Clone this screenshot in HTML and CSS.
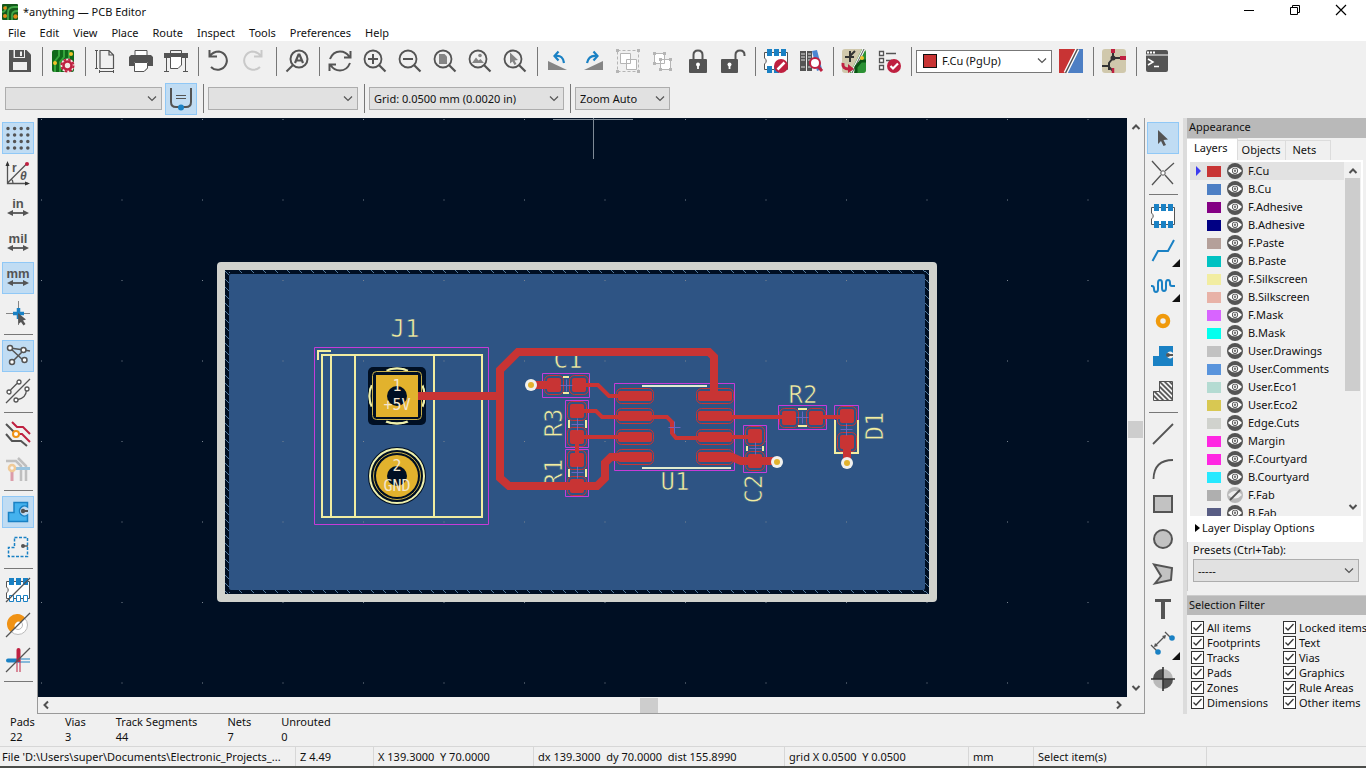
FILE: index.html
```html
<!DOCTYPE html>
<html lang="en">
<head>
<meta charset="utf-8">
<title>*anything — PCB Editor</title>
<link rel="stylesheet" href="styles.css">
</head>
<body>
<svg class="defs" aria-hidden="true">
  <symbol id="eye" viewBox="0 0 16 16"><circle cx="8" cy="8" r="8" fill="#545454"/><path d="M1 8Q8 0 15 8Q8 15 1 8Z" fill="#fff"/><circle cx="8" cy="7.800" r="3.100" fill="#545454"/><circle cx="8" cy="7.800" r="2.200" fill="#fff"/><circle cx="8" cy="7.800" r="1.200" fill="#777"/></symbol>
  <symbol id="eye-off" viewBox="0 0 16 16"><circle cx="8" cy="8" r="8" fill="#b9b9b9"/><path d="M1 8Q8 0 15 8Q8 15 1 8Z" fill="#eee"/><path d="M3 13L13 3" stroke="#545454" stroke-width="1.800"/></symbol>
  <symbol id="lens" viewBox="0 0 24 24"><circle cx="10" cy="10" r="8.500" fill="none" stroke="#545454" stroke-width="1.800"/><path d="M16 16L22.500 22.500" stroke="#545454" stroke-width="2.200"/></symbol>
</svg>

<header class="titlebar">
  <svg class="app-icon" viewBox="0 0 16 16"><rect width="16" height="16" rx="1" fill="#14591b"/><path d="M6 16V9Q6 3 12 3H16M10 16V11Q10 7 16 7M0 8Q4 8 4 2" fill="none" stroke="#42a647" stroke-width="1.800"/><circle cx="3" cy="4" r="1.800" fill="#e18a19"/><circle cx="3" cy="12" r="2" fill="#e18a19"/><circle cx="13.500" cy="12.500" r="2.200" fill="#e18a19"/></svg>
  <h1>*anything — PCB Editor</h1>
  <div class="window-buttons">
    <button aria-label="Minimize"><svg viewBox="0 0 12 12"><path d="M1 6.500H11" stroke="#000"/></svg></button>
    <button aria-label="Restore"><svg viewBox="0 0 12 12"><path d="M1.500 3.500H8.500V10.500H1.500ZM3.500 3.500V1.500H10.500V8.500H8.500" fill="none" stroke="#000"/></svg></button>
    <button aria-label="Close"><svg viewBox="0 0 12 12"><path d="M1 1L11 11M11 1L1 11" stroke="#000" stroke-width="1.200"/></svg></button>
  </div>
</header>

<nav class="menubar">
  <button>File</button><button>Edit</button><button>View</button><button>Place</button><button>Route</button><button>Inspect</button><button>Tools</button><button>Preferences</button><button>Help</button>
</nav>

<div class="toolbar toolbar-main">
  <button class="tool" aria-label="Save"><svg viewBox="0 0 24 24"><path d="M1 1H18.500L23 5.500V23H1Z" fill="#545454"/><path d="M5.500 1H17V9H5.500Z" fill="#f0f0f0"/><path d="M7 1H16V8H7Z" fill="#545454"/><path d="M12 2.500H14V7H12Z" fill="#f0f0f0"/><path d="M5 13H19V21H5Z" fill="#f0f0f0"/></svg></button>
  <span class="sep"></span>
  <button class="tool" aria-label="Board setup"><svg viewBox="0 0 24 24"><rect x="1" y="1" width="22" height="22" rx="2" fill="#10691a"/><path d="M8 1V7L4 12V23M13 1V8L9 13V23M18 1V10" fill="none" stroke="#34a43b" stroke-width="2"/><circle cx="4" cy="14" r="2" fill="#f0c22b"/><circle cx="20" cy="5" r="2" fill="#f0c22b"/><circle cx="16.500" cy="16.500" r="7" fill="#f2e9e4"/><circle cx="16.500" cy="16.500" r="4" fill="none" stroke="#bf2040" stroke-width="2.600"/><circle cx="16.500" cy="16.500" r="6" fill="none" stroke="#bf2040" stroke-width="2" stroke-dasharray="2.700 2"/></svg></button>
  <span class="sep"></span>
  <button class="tool" aria-label="Page settings"><svg viewBox="0 0 24 24" fill="none" stroke="#545454"><path d="M6 1.500H15L19.500 6V19.500H6ZM15 1.500V6H19.500" stroke-width="1.200"/><path d="M2.500 1V20M1 1.500H4M1 19.500H4M5 22.500H20M5.500 21V24M19.500 21V24"/></svg></button>
  <button class="tool" aria-label="Print"><svg viewBox="0 0 24 24"><path d="M6 6V1.500H18V6M6 17V22.500H15L18 19.500V17" fill="#fff" stroke="#545454"/><path d="M2 6H22L24 8V17H19V13H5V17H0V8Z" fill="#545454"/><path d="M5.500 13.500H18.500V19L15 22.500H5.500Z" fill="#fff" stroke="#545454"/></svg></button>
  <button class="tool" aria-label="Plot"><svg viewBox="0 0 24 24" fill="none" stroke="#545454"><path d="M6.500 4V1.500H17.500V4M2.500 8V22.500M21.500 8V22.500M0 22.500H5M19 22.500H24"/><path d="M0 4H24V9H0Z" fill="#545454" stroke="none"/><path d="M6.500 7.500H17.500V16L14 19.500H6.500Z" fill="#fff"/></svg></button>
  <span class="sep"></span>
  <button class="tool" aria-label="Undo"><svg viewBox="0 0 24 24" fill="none" stroke="#545454" stroke-width="2"><path d="M2.500 1V7.500H10M2.500 7.500Q6 2.500 12 2.500A9.200 9.200 0 1 1 4 18"/></svg></button>
  <button class="tool" aria-label="Redo" disabled><svg viewBox="0 0 24 24" fill="none" stroke="#c9c9c9" stroke-width="2"><path d="M19.500 1V7.500H12M19.500 7.500Q16 2.500 10 2.500A9.200 9.200 0 1 0 18 18"/></svg></button>
  <span class="sep"></span>
  <button class="tool" aria-label="Find"><svg viewBox="0 0 24 24" fill="none" stroke="#545454" stroke-width="2"><circle cx="14" cy="10" r="8.500"/><path d="M8 16L1.500 22.500"/><path d="M10 14L13.500 5.500H14.500L18 14M11.500 11.500H16.500" stroke-width="2.200"/></svg></button>
  <span class="sep"></span>
  <button class="tool" aria-label="Refresh"><svg viewBox="0 0 24 24" fill="none" stroke="#545454" stroke-width="2"><path d="M2 10Q5 2.500 12 2.500Q18 2.500 21.500 8M22.500 2V8.500H16M22 14Q19 21.500 12 21.500Q6 21.500 2.500 16M1.500 22V15.500H8"/></svg></button>
  <button class="tool" aria-label="Zoom in"><svg viewBox="0 0 24 24"><use href="#lens"/><path d="M5 10H15M10 5V15" stroke="#545454" stroke-width="2"/></svg></button>
  <button class="tool" aria-label="Zoom out"><svg viewBox="0 0 24 24"><use href="#lens"/><path d="M5 10H15" stroke="#545454" stroke-width="2"/></svg></button>
  <button class="tool" aria-label="Zoom to page"><svg viewBox="0 0 24 24"><use href="#lens"/><path d="M6 5H11.500L14 7.500V15H6Z" fill="#858585"/></svg></button>
  <button class="tool" aria-label="Zoom to objects"><svg viewBox="0 0 24 24"><use href="#lens"/><path d="M4 14L8 8.500L10.500 11.500L12.500 10L16 14Z" fill="#858585"/><circle cx="12" cy="6.500" r="1.800" fill="#858585"/></svg></button>
  <button class="tool" aria-label="Zoom to selection"><svg viewBox="0 0 24 24"><use href="#lens"/><path d="M7 3.500L15 11L11.500 11.500L13.500 15L11.500 16L9.500 12.500L7 14.500Z" fill="#858585"/></svg></button>
  <span class="sep"></span>
  <button class="tool" aria-label="Rotate left"><svg viewBox="0 0 24 24"><path d="M2 12L21 21H2Z" fill="#858585"/><path d="M10 7Q17 6 18 14" fill="none" stroke="#1a81c4" stroke-width="2.200"/><path d="M12.500 2.500L8.500 7L12.500 11.500" fill="none" stroke="#1a81c4" stroke-width="2.200"/></svg></button>
  <button class="tool" aria-label="Rotate right"><svg viewBox="0 0 24 24"><path d="M22 12L3 21H22Z" fill="#858585"/><path d="M15 7Q8 6 6 14" fill="none" stroke="#1a81c4" stroke-width="2.200"/><path d="M12.500 2.500L16.500 7L12.500 11.500" fill="none" stroke="#1a81c4" stroke-width="2.200"/></svg></button>
  <button class="tool" aria-label="Group" disabled><svg viewBox="0 0 24 24" stroke="#b5b5b5"><path d="M1.500 1.500H22.500V22.500H1.500Z" fill="none" stroke-dasharray="3 2"/><path d="M4.500 4.500H14.500V14.500H4.500ZM10.500 10.500H20.500V20.500H10.500Z" fill="#fff"/><path d="M0 1.500H3M21 1.500H24M0 22.500H3M21 22.500H24" stroke-width="3"/></svg></button>
  <button class="tool" aria-label="Ungroup" disabled><svg viewBox="0 0 24 24" stroke="#b5b5b5"><path d="M3.500 4.500H13.500V14.500H3.500ZM9.500 10.500H19.500V20.500H9.500Z" fill="#fff"/><path d="M2 4.500H5M12 4.500H15M2 14.500H5M8 10.500H11M18 10.500H21M8 20.500H11M18 20.500H21" stroke-width="3"/></svg></button>
  <button class="tool" aria-label="Lock"><svg viewBox="0 0 24 24"><path d="M7.500 11V6Q7.500 1.500 12 1.500T16.500 6V11" fill="none" stroke="#545454" stroke-width="2"/><rect x="3" y="10" width="18" height="14" rx="1" fill="#545454"/><path d="M12 14V20" stroke="#fff" stroke-width="1.800"/><circle cx="12" cy="15.500" r="2" fill="#fff"/></svg></button>
  <button class="tool" aria-label="Unlock"><svg viewBox="0 0 24 24"><path d="M14.500 11V6Q14.500 1.500 19 1.500T23.500 6V7" fill="none" stroke="#545454" stroke-width="2"/><rect x="0" y="10" width="17" height="14" rx="1" fill="#545454"/><path d="M8.500 14V20" stroke="#fff" stroke-width="1.800"/><circle cx="8.500" cy="15.500" r="2" fill="#fff"/></svg></button>
  <span class="sep"></span>
  <button class="tool" aria-label="Footprint editor"><svg viewBox="0 0 24 24"><path d="M.5 3.500H23.500V20.500H.5V15Q4 12 .5 9Z" fill="#fff" stroke="#545454"/><path d="M3 0H8V7H3ZM10 0H15V7H10ZM17 0H22V7H17ZM3 17H8V24H3ZM10 17H15V24H10Z" fill="#1a81c4"/><circle cx="17" cy="17" r="7" fill="#bf2040"/><path d="M13.500 20.500L20.500 13.500" stroke="#fff" stroke-width="2.500"/></svg></button>
  <button class="tool" aria-label="Footprint browser"><svg viewBox="0 0 24 24"><path d="M1 2H7V22H1ZM8 2H13V22H8Z" fill="#545454"/><path d="M2 5H6M9 5H12M2 8H6M9 8H12M2 11H6M9 11H12M2 18H6M9 18H12" stroke="#ddd"/><path d="M13 2L18 1L23 20L18 22Z" fill="#4b86d2"/><circle cx="16" cy="14" r="5" fill="#fff" stroke="#bf2040" stroke-width="2"/><path d="M19.500 18L23 22" stroke="#bf2040" stroke-width="3"/></svg></button>
  <span class="sep"></span>
  <button class="tool" aria-label="Update board from schematic"><svg viewBox="0 0 24 24"><rect width="24" height="24" rx="3" fill="#d0c8ac"/><path d="M24 4V21Q24 24 21 24H8L20 0Q24 0 24 4Z" fill="#2b9134"/><path d="M10 24L22 0" stroke="#fff" stroke-width="3"/><path d="M10 24L22 0" stroke="#545454"/><path d="M3 8H12M8 2V13M13 2L8 7" stroke="#333" stroke-width="2"/><path d="M14 24V18L19 12H24" fill="none" stroke="#0b5415" stroke-width="3"/><circle cx="20" cy="9" r="2" fill="#f0c22b"/><path d="M1 14Q0 20 7 20" fill="none" stroke="#bf2040" stroke-width="3"/><path d="M6 15L12 20L6 24Z" fill="#bf2040"/></svg></button>
  <button class="tool" aria-label="Design rules check"><svg viewBox="0 0 24 24"><path d="M2.500 2.500H6.500V6.500H2.500ZM2.500 9.500H6.500V13.500H2.500ZM2.500 16.500H6.500V20.500H2.500Z" fill="#fff" stroke="#545454" stroke-width="1.300"/><path d="M9 4.500H19M9 11.500H15" stroke="#545454" stroke-width="1.500"/><circle cx="17" cy="17" r="7" fill="#bf2040"/><path d="M13.500 17L16 19.500L21 14.500" fill="none" stroke="#fff" stroke-width="2.200"/></svg></button>
  <span class="sep"></span>
  <div class="layer-picker"><span class="layer-picker-swatch"></span><select class="select select-layer" aria-label="Active layer"><option>F.Cu (PgUp)</option></select></div>
  <button class="tool" aria-label="Layer pair"><svg viewBox="0 0 24 24"><rect width="24" height="24" fill="#4d7fc4"/><path d="M0 0H18L6 24H0Z" fill="#c83434"/><path d="M6.500 24L18.500 0" stroke="#fff" stroke-width="4"/><path d="M6.500 24L18.500 0" stroke="#545454" stroke-width="1.500"/></svg></button>
  <span class="sep"></span>
  <button class="tool" aria-label="Schematic editor"><svg viewBox="0 0 24 24"><rect width="24" height="24" rx="3" fill="#d0c8ac"/><path d="M11 1V9L7 14V21M11 9H18M0 17H7M7 18L11 22" fill="none" stroke="#333" stroke-width="2"/><circle cx="11" cy="9" r="2.500" fill="#333"/><path d="M11 0V4M18 9H24" stroke="#bf2040" stroke-width="4"/><path d="M11 19V24" stroke="#bf2040" stroke-width="2.500"/></svg></button>
  <span class="sep"></span>
  <button class="tool" aria-label="Scripting console"><svg viewBox="0 0 24 24"><rect x="1" y="1" width="22" height="22" rx="2" fill="#545454"/><path d="M1 6H23" stroke="#fff"/><path d="M2 3.500H4M5 3.500H7M8 3.500H10" stroke="#fff" stroke-width="2"/><path d="M3 10L8 13L3 16M9 17.500H14" fill="none" stroke="#fff" stroke-width="1.500"/></svg></button>
</div>

<div class="toolbar toolbar-options">
  <select class="select select-track" aria-label="Track width" disabled></select>
  <button class="tool active" aria-label="Auto track width"><svg viewBox="0 0 24 24" fill="none" stroke="#545454" stroke-width="2"><path d="M2 1V15Q2 20 7 20H17Q22 20 22 15V1"/><path d="M7 8.500H17M7 11.500H17" stroke-width="1.200"/><circle cx="12" cy="20.500" r="3" fill="#1a81c4" stroke="none"/></svg></button>
  <span class="sep"></span>
  <select class="select select-via" aria-label="Via size" disabled></select>
  <span class="sep"></span>
  <select class="select select-grid" aria-label="Grid"><option>Grid: 0.0500 mm (0.0020 in)</option></select>
  <span class="sep"></span>
  <select class="select select-zoom" aria-label="Zoom"><option>Zoom Auto</option></select>
</div>

<main class="workspace">
  <div class="sidebar sidebar-left">
    <button class="tool active" aria-label="Show grid"><svg viewBox="0 0 24 24"><path d="M2 2.500H24M2 9H24M2 15.500H24M2 22H24" stroke="#545454" stroke-width="3.500" stroke-linecap="round" stroke-dasharray="0 6.600"/></svg></button>
    <button class="tool" aria-label="Polar coordinates"><svg viewBox="0 0 24 24"><path d="M1.500 2V22.500H22M1.500 22L21 2.500M7 22Q7 19 5 18" fill="none" stroke="#545454" stroke-width="1.300"/><path d="M1.500 0L3.500 5H-.5ZM24 22.500L19 20.500V24.500Z" fill="#333"/><circle cx="21" cy="3" r="2" fill="#bf2040"/><text x="6" y="11" class="glyph">r</text><text x="14" y="19" class="glyph glyph-theta">θ</text></svg></button>
    <button class="tool" aria-label="Inches"><svg viewBox="0 0 24 24"><text x="12" y="12" class="unit">in</text><path d="M4 17H20" stroke="#545454" stroke-width="1.800"/><path d="M1 17L7 14V20ZM23 17L17 14V20Z" fill="#545454"/></svg></button>
    <button class="tool" aria-label="Mils"><svg viewBox="0 0 24 24"><text x="12" y="12" class="unit">mil</text><path d="M4 17H20" stroke="#545454" stroke-width="1.800"/><path d="M1 17L7 14V20ZM23 17L17 14V20Z" fill="#545454"/></svg></button>
    <button class="tool active" aria-label="Millimeters"><svg viewBox="0 0 24 24"><text x="12" y="12" class="unit">mm</text><path d="M4 17H20" stroke="#545454" stroke-width="1.800"/><path d="M1 17L7 14V20ZM23 17L17 14V20Z" fill="#545454"/></svg></button>
    <button class="tool" aria-label="Full-window crosshair"><svg viewBox="0 0 24 24"><path d="M0 12.500H24M12.500 0V24" stroke="#858585"/><path d="M7 12.500H18M12.500 7V18" stroke="#1a81c4" stroke-width="3.500"/><path d="M12 12L20 18.500L17 19.500L19.500 23L17.500 24.500L15 21L12.500 23Z" fill="#545454"/></svg></button>
    <span class="sep"></span>
    <button class="tool active" aria-label="Show ratsnest"><svg viewBox="0 0 24 24" fill="#fff" stroke="#545454" stroke-width="1.500"><path d="M4 4L18 6L24 7M4 4L18 17M18 6L6 18"/><circle cx="4" cy="4" r="2.500"/><circle cx="17.500" cy="6" r="2.500"/><circle cx="18.500" cy="16" r="2.500"/><circle cx="6" cy="18" r="2.500"/></svg></button>
    <button class="tool" aria-label="Curved ratsnest"><svg viewBox="0 0 24 24" fill="none" stroke="#545454" stroke-width="1.300"><path d="M0 24L24 0M4.500 11L11 4.500M20.500 11Q20 19 12 20.500"/><g fill="#fff"><circle cx="3" cy="13" r="2"/><circle cx="13" cy="3" r="2"/><circle cx="21" cy="10" r="2"/><circle cx="10" cy="21" r="2"/></g></svg></button>
    <span class="sep"></span>
    <button class="tool" aria-label="High contrast display"><svg viewBox="0 0 24 24" fill="none" stroke-width="2"><path d="M6 0L11 5H17L24 12M10 12H16L24 20" stroke="#bf2040"/><path d="M0 2L10 12M0 12L6 19H15L21 24" stroke="#545454"/><circle cx="10" cy="12" r="3" fill="#fff" stroke="#f09214"/></svg></button>
    <button class="tool faded" aria-label="Net highlight"><svg viewBox="0 0 24 24" fill="none" stroke-width="2.500"><path d="M0 4H10L15 9V24M12 1L20 9V24" stroke="#777"/><path d="M6 12V24" stroke="#bf2040" stroke-width="3"/><path d="M6 11.500H24" stroke="#1a81c4" stroke-width="3"/><circle cx="6" cy="11" r="3" fill="#fff" stroke="#f09214"/></svg></button>
    <span class="sep"></span>
    <button class="tool active" aria-label="Show filled zones"><svg viewBox="0 0 24 24"><path d="M8 2.500H21.500V7A5 5 0 1 0 21.500 15V21.500H2.500V12.500H8Z" fill="#44b2ee" stroke="#1a81c4" stroke-width="1.500"/><path d="M17 11H22" stroke="#545454" stroke-width="2"/><circle cx="17" cy="11" r="2.200" fill="#545454"/></svg></button>
    <button class="tool" aria-label="Show zone outlines"><svg viewBox="0 0 24 24"><path d="M8.500 2.500H21.500V21.500H2.500V12.500H8.500Z" fill="none" stroke="#1a81c4" stroke-width="1.500" stroke-dasharray="3 1.500"/><path d="M17 11H22" stroke="#545454" stroke-width="1.500"/><circle cx="17" cy="11" r="2" fill="#545454"/></svg></button>
    <span class="sep"></span>
    <button class="tool" aria-label="Sketch pads"><svg viewBox="0 0 24 24"><path d="M.5 3.500H23.500V20.500H.5V15Q4 12 .5 9Z" fill="#fff" stroke="#545454"/><path d="M3 0H8V7H3ZM10 0H15V7H10ZM17 0H22V7H17Z" fill="#1a81c4"/><path d="M3.500 17.500H7.500V23.500H3.500ZM10.500 17.500H14.500V23.500H10.500ZM17.500 17.500H21.500V23.500H17.500Z" fill="#fff" stroke="#1a81c4"/><path d="M0 24L24 0" stroke="#545454" stroke-width="1.300"/></svg></button>
    <button class="tool" aria-label="Sketch vias"><svg viewBox="0 0 24 24"><circle cx="12" cy="12" r="9.500" fill="#fff" stroke="#bbb"/><circle cx="12" cy="12" r="4.500" fill="none" stroke="#bbb"/><path d="M5 19A10 10 0 1 1 19 5L15 9A4.500 4.500 0 0 0 9 15Z" fill="#f09214"/><path d="M0 24L24 0" stroke="#545454" stroke-width="1.300"/></svg></button>
    <button class="tool" aria-label="Sketch tracks"><svg viewBox="0 0 24 24"><path d="M2 12.500H12" stroke="#1a81c4" stroke-width="4" stroke-linecap="round"/><path d="M12 11H24M12 14H24" stroke="#1a81c4"/><path d="M12.500 2V12" stroke="#bf2040" stroke-width="4" stroke-linecap="round"/><path d="M11 12V24M14 12V24" stroke="#bf2040"/><path d="M0 24L24 0" stroke="#545454" stroke-width="1.300"/></svg></button>
    <span class="sep"></span>
  </div>

  <section class="viewport" aria-label="Board">
    <svg class="board" viewBox="38 118 1089 579" preserveAspectRatio="xMidYMid slice">
      <defs>
        <pattern id="grid" x="41" y="119" width="80.500" height="80.500" patternUnits="userSpaceOnUse"><rect width="1" height="1" fill="#7b8490"/></pattern>
        <pattern id="hatch-v" x="225" y="270" width="4" height="8" patternUnits="userSpaceOnUse"><path d="M0 1L4 5" stroke="#557c9f"/></pattern>
        <pattern id="hatch-h" x="225" y="270" width="12" height="4" patternUnits="userSpaceOnUse"><path d="M2 0L5 3" stroke="#557c9f"/></pattern>
        <g id="pad-wide"><rect x="-18.500" y="-7.500" width="37" height="15" rx="5" fill="none" stroke="#c83434"/><rect x="-17" y="-5" width="34" height="10" rx="2" fill="#c83434"/></g>
        <g id="pad-chip"><rect x="-9.500" y="-9.500" width="19" height="19" rx="5" fill="none" stroke="#c83434"/><rect x="-7" y="-7" width="14" height="14" rx="2" fill="#c83434"/></g>
        <g id="via"><circle r="6" fill="#f1f1ee"/><circle r="3" fill="#e2b22d"/></g>
        <path id="origin" d="M-5.500 .5H6.500M.5-5.500V6.500" stroke="#7a6ad0" opacity="0.800"/>
      </defs>
      <rect x="38" y="118" width="1089" height="579" fill="#000f23"/>
      <rect x="221" y="266" width="712" height="332" fill="#000f23" stroke="#d0d2cd" stroke-width="8" stroke-linejoin="round"/>
      <path d="M225 270H229V594H225ZM925 270H929V594H925Z" fill="url(#hatch-v)"/>
      <path d="M229 270H925V274H229ZM229 590H925V594H229Z" fill="url(#hatch-h)"/>
      <rect x="229" y="274" width="696" height="316" rx="2" fill="#2e5484"/>
      <rect x="38" y="118" width="1089" height="579" fill="url(#grid)"/>
      <path d="M553 119.500H633M593.500 118V159" stroke="#7e8a96"/>

      <g class="designator">
        <text x="405" y="337">J1</text>
        <text x="568" y="368">C1</text>
        <text x="675" y="490">U1</text>
        <text x="803" y="403">R2</text>
        <text transform="translate(562 423) rotate(-90)">R3</text>
        <text transform="translate(562 473) rotate(-90)">R1</text>
        <text transform="translate(762 489) rotate(-90)">C2</text>
        <text transform="translate(883 426) rotate(-90)">D1</text>
      </g>

      <g fill="none" stroke="#f2eda1" stroke-width="2">
        <path d="M322 355H482V517H322ZM331 355V517M355 355V517M434 355V517M318 360V351H331"/>
        <path d="M642 386H707M642 468H731" stroke="#e0ecd0"/>
        <path d="M563 377H569M563 393H569M569 420V428M586 420V428M569 469V477M586 469V477M747 446V451M763 446V451M798 409H807M798 426H807M835 420V453H858V420"/>
      </g>
      <g fill="none" stroke="#c63bd8">
        <path d="M314.500 347.500H488.500V524.500H314.500ZM542.500 373.500H589.500V397.500H542.500ZM565.500 400.500H588.500V447.500H565.500ZM565.500 449.500H588.500V496.500H565.500ZM614.500 383.500H734.500V470.500H614.500ZM743.500 425.500H766.500V472.500H743.500ZM778.500 405.500H826.500V429.500H778.500ZM834.500 420V405.500H858.500V420"/>
      </g>

      <rect x="368" y="367" width="58" height="58" rx="5" fill="#000f23"/>
      <circle cx="397" cy="396" r="27.500" fill="none" stroke="#eef0ac" stroke-width="2"/>
      <rect x="370" y="369" width="53" height="53" rx="5" fill="#000f23"/>
      <circle cx="397" cy="396" r="27.500" fill="none" stroke="#eef0ac" stroke-width="2" stroke-dasharray="22 21.200" stroke-dashoffset="11"/>
      <rect x="372.500" y="371.500" width="49" height="48" rx="4" fill="#000f23" stroke="#c9b14a"/>
      <rect x="376" y="375" width="42" height="42" fill="#e2b22d"/>
      <circle cx="397" cy="396" r="10" fill="#000f23"/>
      <circle cx="397" cy="476" r="28" fill="#000f23" stroke="#000f23" stroke-width="2"/>
      <circle cx="397" cy="476" r="27" fill="none" stroke="#eef0ac" stroke-width="2"/>
      <circle cx="397" cy="476" r="23.500" fill="none" stroke="#c9b14a"/>
      <circle cx="397" cy="476" r="21" fill="#e2b22d"/>
      <circle cx="397" cy="476" r="10" fill="#000f23"/>

      <g fill="none" stroke="#c83434" stroke-linecap="round">
        <path d="M418 396H500" stroke-width="8" stroke-linecap="butt"/>
        <path d="M714 396V357L709 352H518L500 370V478L509 486H597L605 478V463L611 457H620M531 385H552M732 457L741 461H777M847 442V463" stroke-width="8"/>
        <path d="M580 385H598L609 396H620M577 411H596L602 417H620M577 437H620M577 437V460M651 417H667L672 422V433L676 438H698M732 417H785M820 417H842M732 437H755" stroke-width="4"/>
      </g>
      <use href="#pad-wide" x="635" y="396"/><use href="#pad-wide" x="635" y="416"/><use href="#pad-wide" x="635" y="437"/><use href="#pad-wide" x="635" y="457"/>
      <use href="#pad-wide" x="715" y="396"/><use href="#pad-wide" x="715" y="416"/><use href="#pad-wide" x="715" y="437"/><use href="#pad-wide" x="715" y="457"/>
      <use href="#pad-chip" x="554" y="385"/><use href="#pad-chip" x="579" y="385"/>
      <use href="#pad-chip" x="577" y="411"/><use href="#pad-chip" x="577" y="437"/>
      <use href="#pad-chip" x="577" y="460"/><use href="#pad-chip" x="577" y="486"/>
      <use href="#pad-chip" x="755" y="436"/><use href="#pad-chip" x="755" y="461"/>
      <use href="#pad-chip" x="789" y="418"/><use href="#pad-chip" x="816" y="418"/>
      <use href="#pad-chip" x="847" y="416"/><use href="#pad-chip" x="847" y="442"/>
      <use href="#via" x="531" y="385"/><use href="#via" x="777" y="462"/><use href="#via" x="847" y="463"/>
      <use href="#origin" x="566" y="385"/><use href="#origin" x="577" y="424"/><use href="#origin" x="577" y="472"/><use href="#origin" x="674" y="427"/><use href="#origin" x="755" y="448"/><use href="#origin" x="802" y="417"/><use href="#origin" x="846" y="429"/>
      <g class="pad-label"><text x="397" y="391">1</text><text x="397" y="410">+5V</text><text x="397" y="471">2</text><text x="397" y="491">GND</text></g>
    </svg>
    <div class="scroll scroll-v"><svg class="arrow" viewBox="0 0 10 10"><path d="M1.500 7L5 3.500L8.500 7"/></svg><span class="thumb"></span><svg class="arrow" viewBox="0 0 10 10"><path d="M1.500 3L5 6.500L8.500 3"/></svg></div>
    <div class="scroll scroll-h"><svg class="arrow" viewBox="0 0 10 10"><path d="M7 1.500L3.500 5L7 8.500"/></svg><span class="thumb"></span><svg class="arrow" viewBox="0 0 10 10"><path d="M3 1.500L6.500 5L3 8.500"/></svg></div>
  </section>

  <div class="sidebar sidebar-right">
    <button class="tool active" aria-label="Select"><svg viewBox="0 0 24 24"><path d="M7 4L17 13.500L12.500 14L15 19L12.500 20L10 15L7 18Z" fill="#545454"/></svg></button>
    <button class="tool" aria-label="Local ratsnest"><svg viewBox="0 0 24 24" fill="none" stroke="#545454"><path d="M1 0L10 10M23 2L14 10M1 24L10 14M22 23L14 14" stroke-width="1.300"/><circle cx="12" cy="12" r="2.200" fill="#fff"/></svg></button>
    <span class="sep"></span>
    <button class="tool" aria-label="Add footprint"><svg viewBox="0 0 24 24"><path d="M.5 3.500H23.500V20.500H.5V15Q4 12 .5 9Z" fill="#fff" stroke="#545454"/><path d="M3 0H8V7H3ZM10 0H15V7H10ZM17 0H22V7H17ZM3 17H8V24H3ZM10 17H15V24H10ZM17 17H22V24H17Z" fill="#1a81c4"/></svg></button>
    <button class="tool more" aria-label="Route tracks"><svg viewBox="0 0 24 24"><path d="M1.500 22L7 12H17L23 1" fill="none" stroke="#1a81c4" stroke-width="2"/></svg></button>
    <button class="tool more" aria-label="Tune length"><svg viewBox="0 0 24 24"><path d="M0 12H1Q3 12 3 15T5 18T7 15V9Q7 6 9 6T11 9V14Q11 17 13 17T15 14V9Q15 6 17 6T19 9V10Q19 12 21 12H24" fill="none" stroke="#1a81c4" stroke-width="2"/></svg></button>
    <button class="tool" aria-label="Add via"><svg viewBox="0 0 24 24"><circle cx="12" cy="12" r="5" fill="none" stroke="#f09a0c" stroke-width="4.500"/></svg></button>
    <button class="tool" aria-label="Add filled zone"><svg viewBox="0 0 24 24"><path d="M8 2H22V9A3.500 3.500 0 1 0 22 13V22H2V12H8Z" fill="#1a81c4"/><path d="M17 11H22" stroke="#545454" stroke-width="2"/><circle cx="17" cy="11" r="2" fill="#545454"/></svg></button>
    <button class="tool" aria-label="Add rule area"><svg viewBox="0 0 24 24"><clipPath id="rule-area"><path d="M8 2H22V22H2V12H8Z"/></clipPath><g clip-path="url(#rule-area)" stroke="#545454" stroke-width="1.600"><path d="M-4 10L12 26M-4 5L18 27M0 4L22 26M2 1L24 23M4-2L26 20M7-4L27 16M11-5L28 12M16-5L28 7"/></g><path d="M8.500 2.500H21.500V21.500H2.500V12.500H8.500Z" fill="none" stroke="#545454"/></svg></button>
    <span class="sep"></span>
    <button class="tool" aria-label="Draw line"><svg viewBox="0 0 24 24"><path d="M2 22L22 2" stroke="#545454" stroke-width="1.800"/></svg></button>
    <button class="tool" aria-label="Draw arc"><svg viewBox="0 0 24 24"><path d="M2.500 22Q3 3 22 3" fill="none" stroke="#545454" stroke-width="1.800"/></svg></button>
    <button class="tool" aria-label="Draw rectangle"><svg viewBox="0 0 24 24"><rect x="3" y="4" width="18" height="16" fill="#c2c2c2" stroke="#545454" stroke-width="2"/></svg></button>
    <button class="tool" aria-label="Draw circle"><svg viewBox="0 0 24 24"><circle cx="12" cy="12" r="9" fill="#c2c2c2" stroke="#545454" stroke-width="2"/></svg></button>
    <button class="tool" aria-label="Draw polygon"><svg viewBox="0 0 24 24"><path d="M3 2.500L21 6L20 18L4 21.500L10 14Z" fill="#c2c2c2" stroke="#545454" stroke-width="2"/></svg></button>
    <button class="tool" aria-label="Add text"><svg viewBox="0 0 24 24"><path d="M4 2H20V5H14V22H10V5H4Z" fill="#545454"/></svg></button>
    <button class="tool more" aria-label="Add dimension"><svg viewBox="0 0 24 24"><path d="M4 14L14 4M0 13L6 19M14 0L20 6" stroke="#545454" stroke-width="1.300"/><path d="M3 15L4 11L7 14ZM15 3L11 4L14 7Z" fill="#545454"/><circle cx="21" cy="6" r="2.800" fill="#1a81c4"/><circle cx="7" cy="20" r="2.800" fill="#1a81c4"/></svg></button>
    <button class="tool" aria-label="Drill origin"><svg viewBox="0 0 24 24"><circle cx="12" cy="12" r="10" fill="#b9b9b9"/><path d="M12 2A10 10 0 0 0 2 12H12ZM12 22A10 10 0 0 0 22 12H12Z" fill="#545454"/><path d="M0 12H24M12 0V24" stroke="#333" stroke-width="1.600"/></svg></button>
  </div>

  <aside class="panels">
    <h2 class="panel-title">Appearance</h2>
    <div class="tabs" role="tablist">
      <button class="tab selected" role="tab" aria-selected="true">Layers</button><button class="tab" role="tab">Objects</button><button class="tab" role="tab">Nets</button>
    </div>
    <div class="layers-page">
      <div class="layers">
        <ul class="layer-list">
          <li class="layer current"><span class="swatch f-cu"></span><button class="vis" aria-label="Toggle F.Cu"><svg><use href="#eye"/></svg></button>F.Cu</li>
          <li class="layer"><span class="swatch b-cu"></span><button class="vis" aria-label="Toggle B.Cu"><svg><use href="#eye"/></svg></button>B.Cu</li>
          <li class="layer"><span class="swatch f-adhesive"></span><button class="vis" aria-label="Toggle F.Adhesive"><svg><use href="#eye"/></svg></button>F.Adhesive</li>
          <li class="layer"><span class="swatch b-adhesive"></span><button class="vis" aria-label="Toggle B.Adhesive"><svg><use href="#eye"/></svg></button>B.Adhesive</li>
          <li class="layer"><span class="swatch f-paste"></span><button class="vis" aria-label="Toggle F.Paste"><svg><use href="#eye"/></svg></button>F.Paste</li>
          <li class="layer"><span class="swatch b-paste"></span><button class="vis" aria-label="Toggle B.Paste"><svg><use href="#eye"/></svg></button>B.Paste</li>
          <li class="layer"><span class="swatch f-silk"></span><button class="vis" aria-label="Toggle F.Silkscreen"><svg><use href="#eye"/></svg></button>F.Silkscreen</li>
          <li class="layer"><span class="swatch b-silk"></span><button class="vis" aria-label="Toggle B.Silkscreen"><svg><use href="#eye"/></svg></button>B.Silkscreen</li>
          <li class="layer"><span class="swatch f-mask"></span><button class="vis" aria-label="Toggle F.Mask"><svg><use href="#eye"/></svg></button>F.Mask</li>
          <li class="layer"><span class="swatch b-mask"></span><button class="vis" aria-label="Toggle B.Mask"><svg><use href="#eye"/></svg></button>B.Mask</li>
          <li class="layer"><span class="swatch drawings"></span><button class="vis" aria-label="Toggle User.Drawings"><svg><use href="#eye"/></svg></button>User.Drawings</li>
          <li class="layer"><span class="swatch comments"></span><button class="vis" aria-label="Toggle User.Comments"><svg><use href="#eye"/></svg></button>User.Comments</li>
          <li class="layer"><span class="swatch eco1"></span><button class="vis" aria-label="Toggle User.Eco1"><svg><use href="#eye"/></svg></button>User.Eco1</li>
          <li class="layer"><span class="swatch eco2"></span><button class="vis" aria-label="Toggle User.Eco2"><svg><use href="#eye"/></svg></button>User.Eco2</li>
          <li class="layer"><span class="swatch edge"></span><button class="vis" aria-label="Toggle Edge.Cuts"><svg><use href="#eye"/></svg></button>Edge.Cuts</li>
          <li class="layer"><span class="swatch magenta"></span><button class="vis" aria-label="Toggle Margin"><svg><use href="#eye"/></svg></button>Margin</li>
          <li class="layer"><span class="swatch magenta"></span><button class="vis" aria-label="Toggle F.Courtyard"><svg><use href="#eye"/></svg></button>F.Courtyard</li>
          <li class="layer"><span class="swatch b-court"></span><button class="vis" aria-label="Toggle B.Courtyard"><svg><use href="#eye"/></svg></button>B.Courtyard</li>
          <li class="layer"><span class="swatch f-fab"></span><button class="vis" aria-label="Toggle F.Fab"><svg><use href="#eye-off"/></svg></button>F.Fab</li>
          <li class="layer"><span class="swatch b-fab"></span><button class="vis" aria-label="Toggle B.Fab"><svg><use href="#eye"/></svg></button>B.Fab</li>
        </ul>
        <div class="scroll scroll-list"><svg class="arrow" viewBox="0 0 10 10"><path d="M1.500 7L5 3.500L8.500 7"/></svg><span class="thumb"></span><svg class="arrow" viewBox="0 0 10 10"><path d="M1.500 3L5 6.500L8.500 3"/></svg></div>
      </div>
      <button class="disclosure"><svg viewBox="0 0 5 8"><path d="M0 0L5 4L0 8Z"/></svg>Layer Display Options</button>
    </div>
    <div class="presets">
      <label for="presets">Presets (Ctrl+Tab):</label>
      <select id="presets" class="select"><option>-----</option></select>
    </div>
    <h2 class="panel-title filter-title">Selection Filter</h2>
    <div class="filters">
      <label><input type="checkbox" checked>All items</label><label><input type="checkbox" checked>Locked items</label>
      <label><input type="checkbox" checked>Footprints</label><label><input type="checkbox" checked>Text</label>
      <label><input type="checkbox" checked>Tracks</label><label><input type="checkbox" checked>Vias</label>
      <label><input type="checkbox" checked>Pads</label><label><input type="checkbox" checked>Graphics</label>
      <label><input type="checkbox" checked>Zones</label><label><input type="checkbox" checked>Rule Areas</label>
      <label><input type="checkbox" checked>Dimensions</label><label><input type="checkbox" checked>Other items</label>
    </div>
  </aside>
</main>

<dl class="board-info">
  <div><dt>Pads</dt><dd>22</dd></div>
  <div><dt>Vias</dt><dd>3</dd></div>
  <div><dt>Track Segments</dt><dd>44</dd></div>
  <div><dt>Nets</dt><dd>7</dd></div>
  <div><dt>Unrouted</dt><dd>0</dd></div>
</dl>
<footer class="statusbar">
  <span>File 'D:\Users\super\Documents\Electronic_Projects_...</span>
  <span>Z 4.49</span>
  <span>X 139.3000&nbsp; Y 70.0000</span>
  <span>dx 139.3000&nbsp; dy 70.0000&nbsp; dist 155.8990</span>
  <span>grid X 0.0500&nbsp; Y 0.0500</span>
  <span>mm</span>
  <span>Select item(s)</span>
  <span></span>
</footer>
</body>
</html>
```
FILE: styles.css
```css
* { box-sizing: border-box; }
body {
  margin: 0;
  height: 100vh;
  display: flex;
  flex-direction: column;
  overflow: hidden;
  background: #f0f0f0;
  color: #111;
  font: 11px/16px "Noto Sans", "Open Sans", sans-serif;
}
button, select, input { font: inherit; color: inherit; margin: 0; }
button { border: 0; padding: 0; background: none; }
svg { display: block; }
.defs { position: absolute; width: 0; height: 0; }

.titlebar { display: flex; align-items: center; height: 24px; padding-left: 2px; background: #fff; }
.app-icon { width: 16px; height: 16px; }
.titlebar h1 { margin: 0 0 0 5px; font-size: 11px; font-weight: 400; }
.window-buttons { display: flex; align-self: flex-start; margin-left: auto; padding-right: 2px; }
.window-buttons button { width: 46px; height: 20px; display: grid; place-items: center; }
.window-buttons svg { width: 12px; height: 12px; }

.menubar { display: flex; gap: 14px; height: 17px; padding-left: 8px; background: #fff; }

.toolbar { display: flex; align-items: center; gap: 3px; }
.toolbar-main { height: 40px; padding-left: 4px; }
.toolbar-options { height: 37px; padding: 0 0 2px 5px; }
.toolbar .sep { width: 5px; height: 29px; background: linear-gradient(#777, #777) 3px 0 / 1px 100% no-repeat; }
.tool { position: relative; flex: none; width: 32px; height: 32px; display: grid; place-items: center; }
.tool svg { width: 24px; height: 24px; overflow: visible; }
.tool.active { background: #c0dcf3; border: 1px solid #90c8f6; }
.tool.faded svg { opacity: 0.4; }
.tool.more::after {
  content: "";
  position: absolute;
  right: -1px;
  bottom: 0;
  border-left: 8px solid transparent;
  border-bottom: 8px solid #111;
}
.select {
  appearance: none;
  height: 23px;
  border: 1px solid #adadad;
  border-radius: 0;
  padding: 0 18px 0 4px;
  opacity: 1;
  background: #e1e1e1 url("data:image/svg+xml,%3Csvg xmlns='http://www.w3.org/2000/svg' width='10' height='6'%3E%3Cpath d='M1 .5L5 4.500L9 .5' fill='none' stroke='%23555' stroke-width='1.200'/%3E%3C/svg%3E") right 4px center no-repeat;
}
.select-track { width: 157px; }
.select-via { width: 150px; }
.select-grid { width: 195px; }
.select-zoom { width: 95px; }
.layer-picker { display: grid; align-items: center; width: 136px; }
.layer-picker > * { grid-area: 1 / 1; }
.select-layer { padding-left: 25px; border-color: #777; background-color: #fff; }
.layer-picker-swatch { z-index: 1; width: 14px; height: 14px; margin-left: 7px; border: 1px solid #111; background: #c83434; }

.workspace { flex: 1; min-height: 0; display: flex; }
.sidebar { flex: none; display: flex; flex-direction: column; gap: 3px; padding-top: 4px; }
.sidebar-left { width: 37px; padding-left: 2px; }
.sidebar-right { width: 42px; padding-left: 2px; border-right: 4px solid #dcdcdc; }
.sidebar .sep { width: 29px; height: 5px; margin-left: 2px; background: linear-gradient(#777, #777) center / 100% 1px no-repeat; }
.glyph { font: 700 12px "Liberation Sans", sans-serif; fill: #545454; }
.glyph-theta { font-style: italic; }
.unit { font: 700 13px "Liberation Sans", sans-serif; fill: #545454; text-anchor: middle; }

.viewport {
  flex: 1;
  min-width: 0;
  display: grid;
  grid-template: minmax(0, 1fr) 16px / minmax(0, 1fr) 17px;
  border: 1px solid #999;
  border-width: 0 1px 1px;
  background: #f0f0f0;
}
.board { width: 100%; height: 100%; }
.designator { font: 24px "DejaVu Sans Mono", monospace; fill: #f2eda1; stroke: #2e5484; stroke-width: 0.6px; text-anchor: middle; }
.pad-label { font: 15px "DejaVu Sans Mono", monospace; fill: #f3e6cf; text-anchor: middle; }
.scroll { display: flex; align-items: center; justify-content: space-between; }
.scroll-v, .scroll-list { flex-direction: column; padding: 4px 0; }
.scroll-h { padding: 0 3px; }
.thumb { background: #cdcdcd; }
.scroll-v .thumb { width: 15px; height: 17px; margin-top: 44px; }
.scroll-h .thumb { width: 18px; height: 15px; margin-left: 133px; }
.arrow { flex: none; width: 10px; height: 10px; fill: none; stroke: #505050; stroke-width: 2; }

.panels { flex: none; width: 179px; display: flex; flex-direction: column; }
.panel-title { flex: none; margin: 0; height: 20px; padding: 1px 0 0 2px; background: #b9b9b9; font-size: 11px; font-weight: 400; }
.tabs { flex: none; display: flex; align-items: flex-end; height: 22px; }
.tab { height: 20px; padding: 0 5px 1px 4px; border: 1px solid #dcdcdc; border-width: 1px 1px 0 0; }
.tab.selected { height: 22px; padding: 0 9px 3px 7px; background: #fff; }
.tab:last-child { padding: 0 14px 1px 6px; }
.layers-page { flex: 1; min-height: 0; display: flex; flex-direction: column; margin-right: 3px; padding: 2px 2px 0 3px; background: #fff; }
.layers { flex: 1; min-height: 0; display: flex; background: #f0f0f0; }
.layer-list { flex: 1; overflow: hidden; margin: 0; padding: 0; list-style: none; }
.layer { position: relative; display: flex; align-items: center; height: 18px; padding-left: 17px; }
.layer.current { background: #e2e2e2; }
.layer.current::before { content: ""; position: absolute; left: 6px; border: 5px solid transparent; border-left-color: #3c3cf0; border-right-width: 0; }
.swatch { width: 14px; height: 11px; }
.vis { width: 16px; height: 16px; margin: 0 5px 0 6px; }
.vis svg { width: 16px; height: 16px; }
.scroll-list { width: 17px; }
.scroll-list .thumb { width: 15px; height: 213px; margin: 2px 0 auto; }
.f-cu { background: #c83434; }
.b-cu { background: #4d7fc4; }
.f-adhesive { background: #840084; }
.b-adhesive { background: #000084; }
.f-paste { background: #b4a09a; }
.b-paste { background: #00c2c2; }
.f-silk { background: #f2eda1; }
.b-silk { background: #e8b2a7; }
.f-mask { background: #d864ff; }
.b-mask { background: #02ffee; }
.drawings { background: #c2c2c2; }
.comments { background: #5994dc; }
.eco1 { background: #b4dbd2; }
.eco2 { background: #d8c852; }
.edge { background: #d0d2cd; }
.magenta { background: #ff26e2; }
.b-court { background: #26e9ff; }
.f-fab { background: #afafaf; }
.b-fab { background: #585d84; }
.disclosure { flex: none; display: flex; align-items: center; gap: 2px; height: 26px; padding: 0 0 2px 5px; }
.disclosure svg { width: 5px; height: 8px; }
.presets { flex: none; display: flex; flex-direction: column; gap: 1px; height: 49px; padding: 0 7px 0 5px; border-left: 1px solid #ccc; }
.filter-title { margin-top: 4px; border-top: 1px solid #ccc; }
.filters { flex: none; display: grid; grid-template-columns: 92px 1fr; padding: 5px 0 4px 4px; white-space: nowrap; }
.filters label { display: flex; align-items: center; gap: 3px; height: 15px; }
.filters input {
  appearance: none;
  flex: none;
  width: 13px;
  height: 13px;
  border: 1px solid #333;
  background: #fff url("data:image/svg+xml,%3Csvg xmlns='http://www.w3.org/2000/svg' width='11' height='11'%3E%3Cpath d='M1.500 5.500L4 8L9.500 2' fill='none' stroke='%23333' stroke-width='1.300'/%3E%3C/svg%3E") center no-repeat;
}

.board-info { flex: none; display: flex; gap: 30px; height: 32px; margin: 0; padding: 0 10px; line-height: 15px; }
.board-info dd { margin: 0; }
.statusbar {
  flex: none;
  display: grid;
  grid-template-columns: 296px 78px 160px 251px 184px 65px 173px 1fr;
  height: 22px;
  border-top: 1px solid #d7d7d7;
  border-bottom: 2px solid #4b4d4a;
  line-height: 20px;
  white-space: nowrap;
}
.statusbar span { overflow: hidden; padding-left: 4px; border-right: 1px solid #d7d7d7; }
.statusbar span:first-child { padding-left: 2px; }
.statusbar span:last-child { border: 0; }
```
